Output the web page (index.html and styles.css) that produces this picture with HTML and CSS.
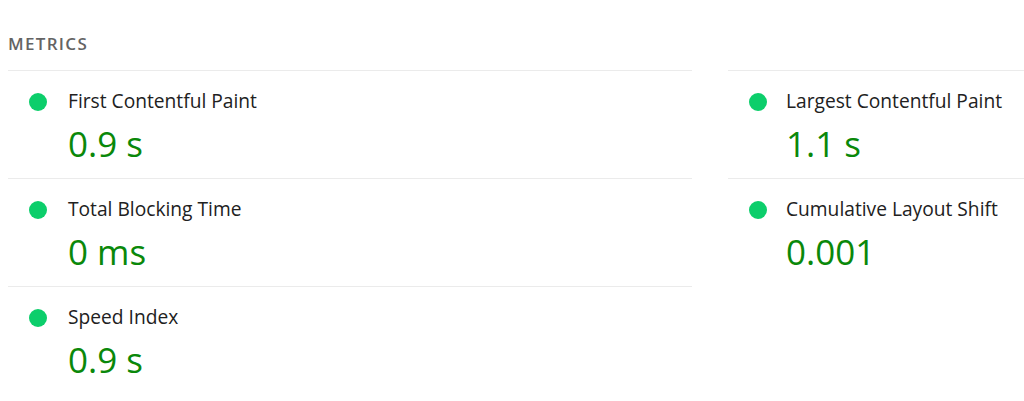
FILE: index.html
```html
<!DOCTYPE html>
<html lang="en">
<head>
    <meta charset="UTF-8">
    <meta name="viewport" content="width=device-width, initial-scale=1.0">
    <title>Metrics</title>
    <link rel="stylesheet" href="styles.css">
</head>
<body>
    <div class="report">
        <h2 class="title">Metrics</h2>

        <!-- Metric grid: two columns -->
        <div class="metrics">
            <div class="metric">
                <span class="dot"></span>
                <div class="info">
                    <div class="label">First Contentful Paint</div>
                    <div class="value">0.9&nbsp;s</div>
                </div>
            </div>
            <div class="metric">
                <span class="dot"></span>
                <div class="info">
                    <div class="label">Largest Contentful Paint</div>
                    <div class="value">1.1&nbsp;s</div>
                </div>
            </div>
            <div class="metric">
                <span class="dot"></span>
                <div class="info">
                    <div class="label">Total Blocking Time</div>
                    <div class="value">0&nbsp;ms</div>
                </div>
            </div>
            <div class="metric">
                <span class="dot"></span>
                <div class="info">
                    <div class="label">Cumulative Layout Shift</div>
                    <div class="value">0.001</div>
                </div>
            </div>
            <div class="metric">
                <span class="dot"></span>
                <div class="info">
                    <div class="label">Speed Index</div>
                    <div class="value">0.9&nbsp;s</div>
                </div>
            </div>
        </div>
    </div>
</body>
</html>
```
FILE: styles.css
```css
body {
    margin: 0;
    font-family: "Open Sans", "Noto Sans", sans-serif;
    background-color: #fff;
    color: #333;
    overflow: hidden;
}

.report {
    padding-left: 8px;
}

.title {
    margin: 0;
    padding: 33px 0 16px;
    font-size: 17px;
    font-weight: 600;
    letter-spacing: 1.3px;
    text-transform: uppercase;
    color: #646464;
    line-height: 21px;
}

.metrics {
    display: grid;
    grid-template-columns: 684px 1fr;
    column-gap: 36px;
}

.metric {
    display: flex;
    align-items: flex-start;
    height: 107px;
    border-top: 1px solid #ebebeb;
    padding-left: 21px;
}

.dot {
    flex: none;
    width: 18px;
    height: 18px;
    margin-top: 22px;
    border-radius: 50%;
    background-color: #0cce6b;
}

.info {
    margin-left: 21px;
    padding-top: 18px;
}

.label {
    font-size: 19.2px;
    line-height: 24px;
    color: #212121;
}

.value {
    margin-top: 9px;
    font-size: 35px;
    line-height: 44px;
    color: #0a880a;
}

.metric:nth-child(even) .info {
    margin-left: 19px;
}
```
